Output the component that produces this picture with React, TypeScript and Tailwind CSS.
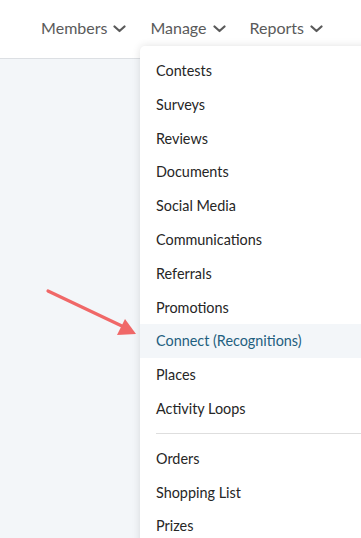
const navItems = ["Members", "Manage", "Reports"];

const groups = [
  ["Contests", "Surveys", "Reviews", "Documents", "Social Media", "Communications", "Referrals", "Promotions", "Connect (Recognitions)", "Places", "Activity Loops"],
  ["Orders", "Shopping List", "Prizes"],
];

function Chevron() {
  return (
    <svg width="13" height="8" viewBox="0 0 13 8" fill="none" className="mt-[2px]">
      <path d="M1.5 1.5 L6.5 6 L11.5 1.5" stroke="currentColor" strokeWidth="2.2" strokeLinecap="round" strokeLinejoin="round" />
    </svg>
  );
}

export default function App() {
  return (
    <div className="w-[361px] h-[538px] overflow-hidden bg-[#f3f6f9] flex flex-col" style={{ fontFamily: "Lato, 'Open Sans', sans-serif" }}>
      <header className="h-[59px] shrink-0 bg-white border-b border-[#dcdfe3] flex items-center justify-end pr-[38px] pb-[3px] gap-[24px] text-[16px] text-[#5a5a5a]">
        {navItems.map((n) => (
          <div key={n} className="flex items-center gap-[6px]">
            <span>{n}</span>
            <Chevron />
          </div>
        ))}
      </header>

      <main className="relative flex-1">
        <svg className="absolute left-0 top-0" width="140" height="479" viewBox="0 0 140 479">
          <line x1="48" y1="232" x2="124" y2="268" stroke="#f06868" strokeWidth="3.2" strokeLinecap="round" />
          <polygon points="136,275 117,276 125,260" fill="#f06868" />
        </svg>

        <div className="absolute left-[140px] top-[-13px] w-[240px] bg-white rounded-[5px] shadow-[0_0_8px_rgba(0,0,0,0.12)] pt-[8px] pb-[20px] text-[14.4px] text-[#262626]">
          {groups.map((g, gi) => (
            <div key={gi}>
              {gi > 0 && <div className="ml-[16px] mt-[7px] mb-[8px] h-px bg-[#dedede]" />}
              {g.map((item) => (
                <div
                  key={item}
                  className={
                    item === "Connect (Recognitions)"
                      ? "h-[33.8px] flex items-center pl-[16px] bg-[#f3f6f9] text-[#1f5f80]"
                      : "h-[33.8px] flex items-center pl-[16px]"
                  }
                >
                  {item}
                </div>
              ))}
            </div>
          ))}
        </div>
      </main>
    </div>
  );
}
